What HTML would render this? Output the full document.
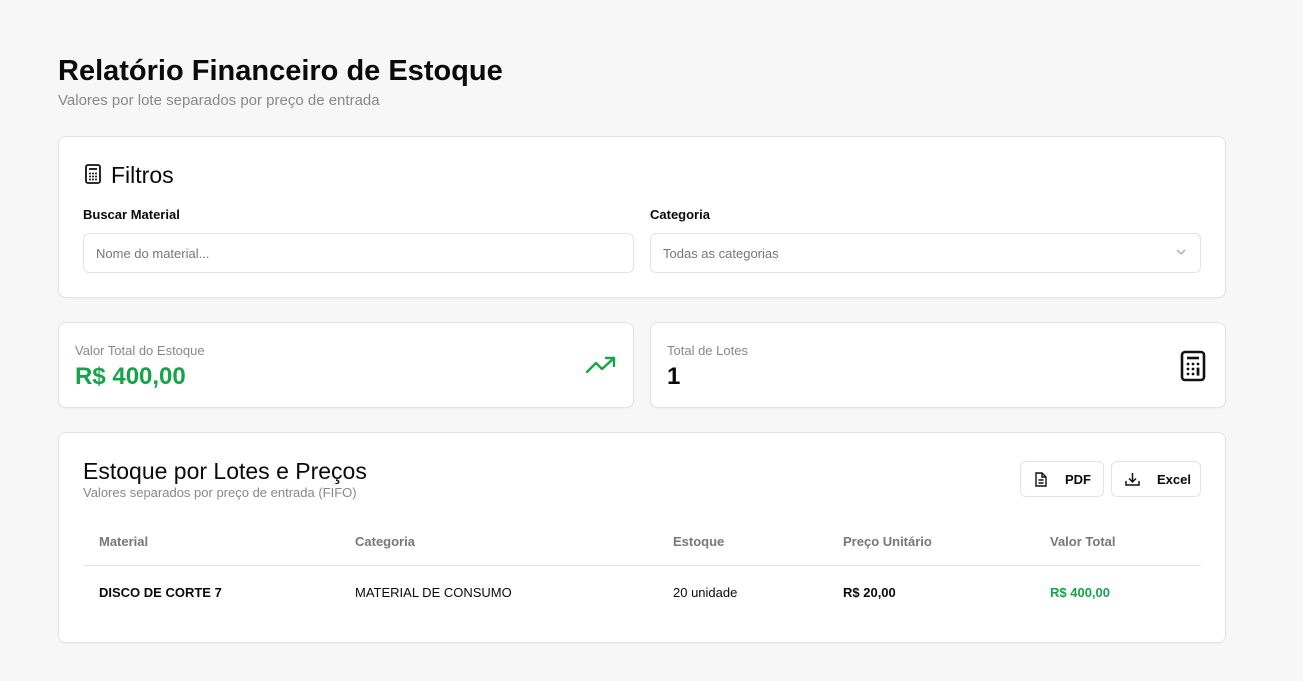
<!DOCTYPE html>
<html><head><meta charset="utf-8"><style>
*{box-sizing:border-box;margin:0;padding:0}
body{width:1303px;height:681px;background:#f7f7f7;font-family:"Liberation Sans",sans-serif;color:#0a0a0a;position:relative;overflow:hidden}
.abs{position:absolute}
.card{position:absolute;background:#fff;border:1px solid #e3e3e3;border-radius:8px;box-shadow:0 1px 2px rgba(0,0,0,.04)}
.lbl{font-size:13px;font-weight:bold}
.inp{position:absolute;border:1px solid #e3e3e3;border-radius:6px;height:40px;font-size:13px;color:#777;padding:12px 12px}
.muted{color:#888}
th{font-weight:bold}
</style></head><body>
<div class="abs" style="left:58px;top:55px;font-size:29px;font-weight:bold">Relatório Financeiro de Estoque</div>
<div class="abs muted" style="left:58px;top:92px;font-size:15px">Valores por lote separados por preço de entrada</div>

<div class="card" style="left:58px;top:136px;width:1168px;height:162px">
 <svg class="abs" style="left:25px;top:27px" width="18" height="20" viewBox="0 0 18 20" fill="none" stroke="#111" stroke-width="1.8"><rect x="2" y="1" width="14" height="18" rx="2"/><line x1="5" y1="5" x2="13" y2="5"/><g fill="#111" stroke="none"><circle cx="6" cy="9.5" r="1"/><circle cx="9" cy="9.5" r="1"/><circle cx="12" cy="9.5" r="1"/><circle cx="6" cy="12.5" r="1"/><circle cx="9" cy="12.5" r="1"/><circle cx="12" cy="12.5" r="1"/><circle cx="6" cy="15.5" r="1"/><circle cx="9" cy="15.5" r="1"/><circle cx="12" cy="15.5" r="1"/></g></svg>
 <div class="abs" style="left:52px;top:25px;font-size:23px">Filtros</div>
 <div class="abs lbl" style="left:24px;top:70px">Buscar Material</div>
 <div class="abs lbl" style="left:591px;top:70px">Categoria</div>
 <div class="inp" style="left:24px;top:96px;width:551px">Nome do material...</div>
 <div class="inp" style="left:591px;top:96px;width:551px">Todas as categorias
  <svg class="abs" style="right:14px;top:15px" width="10" height="7" viewBox="0 0 10 7" fill="none" stroke="#aaa" stroke-width="1.3"><path d="M1 1l4 4 4-4"/></svg></div>
</div>

<div class="card" style="left:58px;top:322px;width:576px;height:86px">
 <div class="abs muted" style="left:16px;top:20px;font-size:13px">Valor Total do Estoque</div>
 <div class="abs" style="left:16px;top:40px;font-size:24px;font-weight:bold;color:#16a34a">R$ 400,00</div>
 <svg class="abs" style="left:526px;top:32px" width="32" height="20" viewBox="0 0 32 20" fill="none" stroke="#16a34a" stroke-width="2.4" stroke-linecap="round" stroke-linejoin="round"><path d="M2 17l9-9 6 6 12-11"/><path d="M21 3h8v8"/></svg>
</div>
<div class="card" style="left:650px;top:322px;width:576px;height:86px">
 <div class="abs muted" style="left:16px;top:20px;font-size:13px">Total de Lotes</div>
 <div class="abs" style="left:16px;top:40px;font-size:24px;font-weight:bold">1</div>
 <svg class="abs" style="left:529px;top:27px" width="26" height="32" viewBox="0 0 26 32" fill="none" stroke="#111" stroke-width="2.6"><rect x="2" y="2" width="22" height="28" rx="3"/><line x1="7" y1="8" x2="19" y2="8"/><g fill="#111" stroke="none"><circle cx="8" cy="14" r="1.4"/><circle cx="13" cy="14" r="1.4"/><circle cx="18" cy="14" r="1.4"/><circle cx="8" cy="19" r="1.4"/><circle cx="13" cy="19" r="1.4"/><circle cx="8" cy="24" r="1.4"/><circle cx="13" cy="24" r="1.4"/><rect x="16.6" y="17.6" width="2.8" height="8"/></g></svg>
</div>

<div class="card" style="left:58px;top:432px;width:1168px;height:211px">
 <div class="abs" style="left:24px;top:25px;font-size:23px">Estoque por Lotes e Preços</div>
 <div class="abs muted" style="left:24px;top:52px;font-size:13px">Valores separados por preço de entrada (FIFO)</div>
 <div class="abs" style="left:961px;top:28px;width:84px;height:36px;border:1px solid #e3e3e3;border-radius:6px;font-size:13px;font-weight:bold">
  <svg class="abs" style="left:14px;top:10px" width="12" height="15" viewBox="0 0 12 15" fill="none" stroke="#111" stroke-width="1.4"><path d="M1 1h6l4 4v9H1z"/><path d="M7 1v4h4M3.5 8h5M3.5 11h5"/></svg>
  <span class="abs" style="left:44px;top:10px">PDF</span></div>
 <div class="abs" style="left:1052px;top:28px;width:90px;height:36px;border:1px solid #e3e3e3;border-radius:6px;font-size:13px;font-weight:bold">
  <svg class="abs" style="left:13px;top:10px" width="15" height="15" viewBox="0 0 15 15" fill="none" stroke="#111" stroke-width="1.5"><path d="M1 9v4h13V9M7.5 1v9M4 6.5l3.5 3.5 3.5-3.5"/></svg>
  <span class="abs" style="left:45px;top:10px">Excel</span></div>
 <div class="abs" style="left:24px;top:132px;width:1118px;height:1px;background:#e3e3e3"></div>
 <div class="abs muted" style="top:101px;left:40px;font-size:13px;font-weight:bold;color:#777">Material</div>
 <div class="abs" style="top:101px;left:296px;font-size:13px;font-weight:bold;color:#777">Categoria</div>
 <div class="abs" style="top:101px;left:614px;font-size:13px;font-weight:bold;color:#777">Estoque</div>
 <div class="abs" style="top:101px;left:784px;font-size:13px;font-weight:bold;color:#777">Preço Unitário</div>
 <div class="abs" style="top:101px;left:991px;font-size:13px;font-weight:bold;color:#777">Valor Total</div>
 <div class="abs" style="top:152px;left:40px;font-size:13px;font-weight:bold">DISCO DE CORTE 7</div>
 <div class="abs" style="top:152px;left:296px;font-size:13px">MATERIAL DE CONSUMO</div>
 <div class="abs" style="top:152px;left:614px;font-size:13px">20 unidade</div>
 <div class="abs" style="top:152px;left:784px;font-size:13px;font-weight:bold">R$ 20,00</div>
 <div class="abs" style="top:152px;left:991px;font-size:13px;font-weight:bold;color:#16a34a">R$ 400,00</div>
</div>
</body></html>
